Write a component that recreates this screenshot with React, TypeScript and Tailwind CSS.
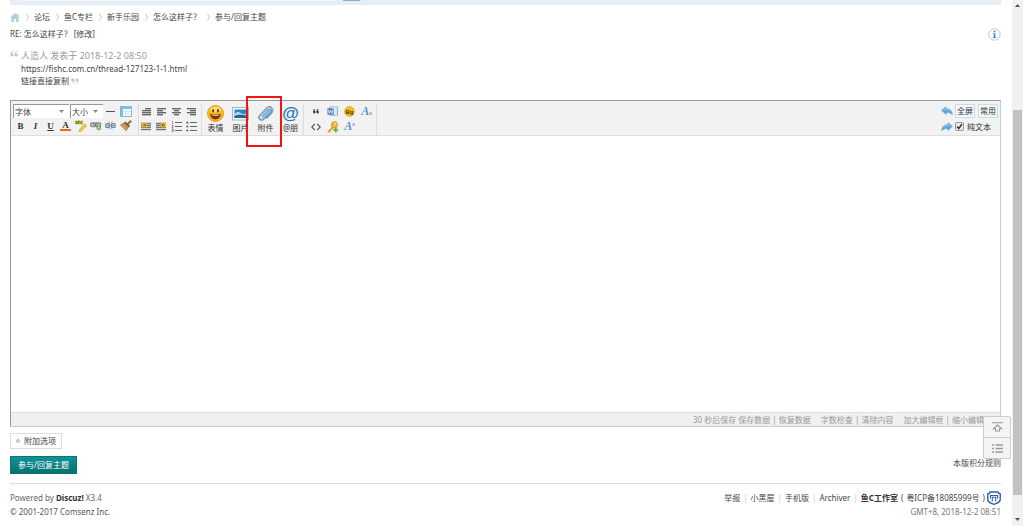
import type { ReactNode } from "react";

function Cell({ label, children }: { label: string; children: ReactNode }) {
  return (
    <button type="button" aria-label={label} className="flex h-[15px] w-[15px] items-center justify-center">
      {children}
    </button>
  );
}

function Lines({ rows }: { rows: number[][] }) {
  return (
    <svg width="11" height="10" viewBox="0 0 11 10">
      {rows.map(([x, w], i) => (
        <rect key={i} x={x} y={1 + i * 2} width={w} height="1.4" fill="#666" />
      ))}
    </svg>
  );
}

function Indent({ x }: { x: number }) {
  return (
    <svg width="11" height="10" viewBox="0 0 11 10">
      <path d="M0 1.500h10M0 3.500h10M0 5.500h10M0 7.600h10" stroke="#777" strokeWidth="1.300" />
      <rect x={x} y=".5" width="5" height="4.800" fill="#f0c020" />
      <path d={x > 3 ? "M6 3h3M7.5 1.8L6 3l1.5 1.2" : "M2 3h3M3.6 1.8L5 3 3.6 4.2"} stroke="#6b4c00" strokeWidth=".8" fill="none" />
    </svg>
  );
}

function BulletList({ numbered }: { numbered?: boolean }) {
  return (
    <svg width="11" height="11" viewBox="0 0 11 11">
      <path d="M4 1.500h7M4 5.500h7M4 9.500h7" stroke="#666" strokeWidth="1" />
      {numbered ? (
        <path d="M1.500.5v2.600M.7 4.400h1.400v1L.8 6.600h1.500M.7 8h1.500v2.400H.7M1 9.200h1.200" stroke="#666" strokeWidth=".7" fill="none" />
      ) : (
        <path d="M.5 .8h1.700v1.600H.5zM.5 4.700h1.700v1.600H.5zM.5 8.700h1.700v1.600H.5z" fill="#444" />
      )}
    </svg>
  );
}

function Picker({ label, width }: { label: string; width: string }) {
  return (
    <span className={"grid h-[14px] items-center border-t border-l border-[#999] bg-white " + width}>
      <select aria-label={label} className="col-start-1 row-start-1 h-[13px] w-full appearance-none bg-transparent pl-px text-[8px] leading-[12px] text-[#444]">
        <option>{label}</option>
      </select>
      <svg className="pointer-events-none col-start-1 row-start-1 mr-[5px] justify-self-end" width="5" height="3" viewBox="0 0 5 3">
        <path d="M0 0h5L2.500 3z" fill="#888" />
      </svg>
    </span>
  );
}

function Big({ label, children, marked }: { label: string; children: ReactNode; marked?: boolean }) {
  return (
    <button type="button" className="relative flex h-[30px] w-[25px] flex-col items-center">
      <span className="flex h-[19px] items-center justify-center">{children}</span>
      <span className="text-[8px] leading-[10px] whitespace-nowrap text-[#333]">{label}</span>
      {marked && <span className="pointer-events-none absolute -top-[8px] -left-[7px] z-10 h-[51px] w-[36px] border-2 border-[#f01414]" />}
    </button>
  );
}

function Divider() {
  return <span className="block h-[31px] border-l border-[#dcdcdc]" />;
}

function Arrow({ flip }: { flip?: boolean }) {
  return (
    <svg width="12" height="10" viewBox="0 0 12 10">
      <g transform={flip ? "matrix(-1 0 0 1 12 0)" : undefined}>
        <path d="M.6 4.200L5 .8v2c3.600-.1 6 1.900 6.300 6C9.800 6.700 8 6.600 5 6.600v2z" fill="#55a9e2" stroke="#3c8cc8" strokeWidth=".5" />
        <path d="M2 4.100L4.600 2.200v1.400c2 0 3.500.4 4.600 1.600" stroke="#a6d8f5" strokeWidth=".7" fill="none" />
      </g>
    </svg>
  );
}

function Crumb({ children }: { children: ReactNode }) {
  return (
    <li className="flex items-center gap-[5px]">
      <svg width="3" height="8" viewBox="0 0 3 8">
        <path d="M.5.5L2.500 4 .5 7.500" stroke="#bbb" fill="none" strokeWidth=".8" />
      </svg>
      <a href="#">{children}</a>
    </li>
  );
}

function Bar() {
  return <span className="mx-[3px] text-[#ccc]">|</span>;
}

function Toolbar() {
  return (
    <div className="flex h-[35px] items-start justify-between border-b border-[#dedede] bg-[#f2f2f2] pt-[3px] pr-[2px] pl-[2px]">
      <div className="flex items-start">
        <div className="w-[125px]">
          <div className="flex h-[14px] items-center">
            <Picker label="字体" width="w-[56px]" />
            <span className="ml-px flex"><Picker label="大小" width="w-[33px]" /></span>
            <Cell label="分隔线">
              <svg width="9" height="3"><path d="M0 1.500h9" stroke="#555" /></svg>
            </Cell>
            <Cell label="表格">
              <svg width="12" height="11" viewBox="0 0 12 11">
                <rect x=".5" y=".5" width="11" height="10" fill="#fff" stroke="#8ab4cd" />
                <path d="M1 1h10v2H1zM1 3h2v7H1z" fill="#6cc3ee" />
                <path d="M3 5.500h8M3 7.800h8M5.500 3v7M8 3v7" stroke="#b9dcef" strokeWidth=".6" />
              </svg>
            </Cell>
          </div>
          <div className="flex font-['Liberation_Serif',serif] text-[9px] leading-[10px] text-[#333]">
            <Cell label="粗体"><b>B</b></Cell>
            <Cell label="斜体"><b><i>I</i></b></Cell>
            <Cell label="下划线"><b className="underline">U</b></Cell>
            <Cell label="文字颜色"><b className="border-b-2 border-[#f26b1d] px-[2px] leading-[8px]">A</b></Cell>
            <Cell label="背景颜色">
              <svg width="12" height="12" viewBox="0 0 12 12">
                <path d="M0 .5h8v4H0z" fill="#dce84c" />
                <text x="0" y="4" fontSize="5" fontFamily="Liberation Sans" fill="#333">abc</text>
                <path d="M4.500 9.500L9.500 4l2 1.700-5 5.300-2.500.5z" fill="#f0d53a" stroke="#a08a20" strokeWidth=".5" />
              </svg>
            </Cell>
            <Cell label="链接">
              <svg width="12" height="11" viewBox="0 0 12 11">
                <g fill="#ccc" stroke="#888" strokeWidth="1.300"><rect x=".7" y="3" width="5" height="3.600" rx="1" /><rect x="5.500" y="3" width="5" height="3.600" rx="1" /></g>
                <path d="M3 4.800h5" stroke="#777" />
                <circle cx="8.800" cy="7.800" r="2.400" fill="#46aa3d" /><path d="M7.400 7.800h2.800M8.800 6.400v2.800" stroke="#fff" strokeWidth=".7" />
              </svg>
            </Cell>
            <Cell label="取消链接">
              <svg width="11" height="11" viewBox="0 0 12 11">
                <g fill="#cdd6de" stroke="#74879a" strokeWidth="1.400"><rect x="1" y="3.500" width="4" height="4" rx="1" /><rect x="7" y="3.500" width="4" height="4" rx="1" /></g>
                <path d="M4 1l1 1.500M8 1L7 2.500M4 10l1-1.500M8 10L7 8.500M3 5.500h2M7 5.500h2" stroke="#55779a" strokeWidth=".8" />
              </svg>
            </Cell>
            <Cell label="清除格式">
              <svg width="12" height="11" viewBox="0 0 12 11">
                <path d="M10.600 0L7 3.300l1.400 1.500L12 1.400z" fill="#a06a38" />
                <path d="M4.500 2.500l4.500 4-2.800 4.200L.4 5z" fill="#c9904e" stroke="#8b5a2a" strokeWidth=".5" />
                <path d="M4.800 2.200l4.600 4.300" stroke="#6d5a4a" strokeWidth="1.800" /><path d="M2.500 5.200l4 4" stroke="#e9c48c" strokeWidth=".7" />
              </svg>
            </Cell>
          </div>
        </div>
        <Divider />
        <div className="grid w-[60px] grid-cols-4">
          <Cell label="自动排版"><Lines rows={[[4, 6], [1, 9], [1, 9], [1, 9]]} /></Cell>
          <Cell label="居左"><Lines rows={[[1, 9], [1, 6], [1, 9], [1, 6]]} /></Cell>
          <Cell label="居中"><Lines rows={[[1, 9], [3, 5], [1, 9], [3, 5]]} /></Cell>
          <Cell label="居右"><Lines rows={[[1, 9], [4, 6], [1, 9], [4, 6]]} /></Cell>
          <Cell label="左浮动"><Indent x={1} /></Cell>
          <Cell label="右浮动"><Indent x={5} /></Cell>
          <Cell label="排序的列表"><BulletList numbered /></Cell>
          <Cell label="未排序列表"><BulletList /></Cell>
        </div>
        <div className="ml-[2px]"><Divider /></div>
        <div className="ml-px flex">
          <Big label="表情">
            <svg width="17" height="17" viewBox="0 0 17 17">
              <circle cx="8.500" cy="8.500" r="8" fill="#f8b922" stroke="#db8c14" strokeWidth=".8" />
              <ellipse cx="8.500" cy="4.500" rx="5.500" ry="3" fill="#ffdf66" />
              <ellipse cx="6.100" cy="5.800" rx="1" ry="1.700" fill="#59340b" /><ellipse cx="10.900" cy="5.800" rx="1" ry="1.700" fill="#59340b" />
              <path d="M3.300 8.800q5.200 1.800 10.400 0c0 3.600-2.300 5.600-5.200 5.600s-5.200-2-5.200-5.600z" fill="#7a3510" />
              <path d="M4.600 9.600q3.900 1 7.800 0l-.3.800q-3.600.8-7.200 0z" fill="#f6d9a0" />
            </svg>
          </Big>
          <Big label="图片">
            <svg width="17" height="14" viewBox="0 0 17 14">
              <rect x=".5" y=".5" width="16" height="12.500" fill="#f6f9fa" stroke="#a4b5be" />
              <rect x="2.500" y="2.500" width="12" height="8.500" fill="#3186c8" />
              <path d="M2.500 7c3-3 5-2 7-.5s3.500.5 5-.5V9h-12z" fill="#a6dcf5" /><path d="M2.500 9c4-2 8-1 12-.6V11h-12z" fill="#236a7c" />
            </svg>
          </Big>
          <Big label="附件" marked>
            <svg width="17" height="17" viewBox="0 0 17 17" fill="none" strokeLinecap="round">
              <path d="M5.500 11.500l6-6.300c1.300-1.400 3 .2 1.800 1.600l-6.800 7c-2.500 2.400-6-.6-3.600-3.300l6.800-7.200c3.200-3.200 7.800.6 4.900 4.300l-4.900 5.300" stroke="#4583b5" strokeWidth="1.700" />
              <path d="M5.500 11.500l6-6.300c1.300-1.400 3 .2 1.800 1.600l-6.800 7c-2.500 2.400-6-.6-3.600-3.300l6.800-7.200c3.200-3.200 7.800.6 4.900 4.300l-4.900 5.300" stroke="#b4d7ef" strokeWidth=".7" />
            </svg>
          </Big>
          <Big label="@朋">
            <span className="font-['Liberation_Sans',sans-serif] text-[17px] leading-[18px] font-bold text-[#2478b8]">@</span>
          </Big>
        </div>
        <Divider />
        <div className="ml-[3px] grid w-[68px] grid-cols-4 justify-items-center">
          <Cell label="引用">
            <svg width="6" height="5" viewBox="0 0 6 5"><path d="M2.400.3C1.700.7 1.400 1.200 1.500 1.900c.7 0 1.100.5 1.100 1.200 0 1.900-2.500 1.900-2.500-.4C.1 1.200.9.200 2.200 0zM5.700.3C5 .7 4.700 1.200 4.800 1.900c.7 0 1.100.5 1.100 1.200 0 1.900-2.500 1.900-2.500-.4C3.400 1.200 4.200.2 5.500 0z" fill="#333" /></svg>
          </Cell>
          <Cell label="Word">
            <svg width="11" height="11" viewBox="0 0 12 11">
              <path d="M3 .5h8.500v9H3z" fill="#fff" stroke="#8aa5cb" /><path d="M8 3h3M8 5h3M8 7h3" stroke="#9bb5da" strokeWidth=".7" />
              <path d="M.5 2h7v7h-7z" fill="#4d7fc5" /><path d="M1.500 3.500l1 4L4 4.200l1.500 3.300 1-4" stroke="#fff" strokeWidth=".8" fill="none" />
            </svg>
          </Cell>
          <Cell label="背景">
            <svg width="11" height="11" viewBox="0 0 11 11">
              <circle cx="5.500" cy="5.500" r="5" fill="#f2bd24" stroke="#e0a81e" strokeWidth=".6" />
              <text x="5.500" y="7.500" textAnchor="middle" fontSize="6" fontWeight="bold" fontFamily="Liberation Sans" fill="#4f390b">Bg</text>
            </svg>
          </Cell>
          <Cell label="下标"><b className="flex items-end font-['Liberation_Serif',serif] text-[12px] leading-[11px] text-[#5a8fd6] italic">A<span className="text-[7px] leading-[7px]">s</span></b></Cell>
          <Cell label="代码">
            <svg width="10" height="8" viewBox="0 0 10 8"><path d="M3.800 1L.8 4l3 3M6.200 1l3 3-3 3" stroke="#555" strokeWidth="1.100" fill="none" /></svg>
          </Cell>
          <Cell label="密码">
            <svg width="12" height="12" viewBox="0 0 12 12">
              <circle cx="7.500" cy="3.800" r="3.200" fill="#f2b73b" stroke="#cb8517" strokeWidth=".6" /><circle cx="8.500" cy="3" r=".8" fill="#fff" />
              <path d="M5.500 5.500L1 10l.5 1.300 1.700-.3.500-1.500 3.300-2.600z" fill="#eba92f" stroke="#cb8517" strokeWidth=".4" />
              <path d="M8.800 6.500v5M6.300 9h5" stroke="#54b82f" strokeWidth="1.700" />
            </svg>
          </Cell>
          <Cell label="上标"><b className="flex items-start font-['Liberation_Serif',serif] text-[12px] leading-[11px] text-[#5a8fd6] italic">A<span className="text-[7px] leading-[7px]">s</span></b></Cell>
        </div>
        <div className="ml-px"><Divider /></div>
      </div>
      <div className="flex flex-col text-[8px] text-[#333]">
        <div className="flex h-[14px] items-center gap-[2px]">
          <button type="button" aria-label="撤销"><Arrow /></button>
          <button type="button" className="h-[14px] w-[20px] border border-[#c9dceb] bg-[#f4f8fb] leading-[12px] whitespace-nowrap">全屏</button>
          <button type="button" className="ml-px h-[14px] w-[20px] border border-[#c9dceb] bg-[#f4f8fb] leading-[12px] whitespace-nowrap">常用</button>
        </div>
        <div className="flex h-[17px] items-center gap-[2px]">
          <button type="button" aria-label="重做"><Arrow flip /></button>
          <label className="flex items-center gap-[3px] leading-[12px]">
            <span className="grid items-center justify-items-center">
              <input type="checkbox" defaultChecked className="peer col-start-1 row-start-1 h-[9px] w-[9px] appearance-none rounded-[2px] border border-[#999] bg-[#eee]" />
              <svg className="pointer-events-none invisible col-start-1 row-start-1 peer-checked:visible" width="7" height="7" viewBox="0 0 7 7"><path d="M1 3.500L2.800 5.500 6 1" stroke="#333" strokeWidth="1.500" fill="none" /></svg>
            </span>
            纯文本
          </label>
        </div>
      </div>
    </div>
  );
}

export default function App() {
  return (
    <div className="flex min-h-screen bg-white font-['Noto_Sans','Noto_Sans_CJK_SC',sans-serif] text-[8px] leading-[12px] text-[#444]">
      <div className="min-w-0 flex-1 pr-[11px] pl-[10px]">
        <div className="flex h-[5px] items-start bg-[#e6edf5] pl-[10px]">
          <span className="h-px w-[316px] bg-[#f4f7f9]" />
          <span className="ml-[7px] h-px w-[17px] bg-[#82b1dc]" />
        </div>
        <nav className="mt-[6px] h-[12px]" aria-label="位置">
          <ol className="flex items-center gap-[6px]">
            <li>
              <a href="#" aria-label="首页">
                <svg width="10" height="9" viewBox="0 0 10 9"><path d="M5 0L0 4.600h1.400V9H4V6h2v3h2.600V4.600H10L8.300 3V.8H7v1z" fill="#b5cde0" /></svg>
              </a>
            </li>
            <Crumb>论坛</Crumb>
            <Crumb>鱼C专栏</Crumb>
            <Crumb>新手乐园</Crumb>
            <Crumb>怎么这样子？</Crumb>
            <Crumb>参与/回复主题</Crumb>
          </ol>
        </nav>
        <div className="mt-[4px] flex h-[14px] items-center justify-between">
          <h1>RE: 怎么这样子？ [<a href="#">修改</a>]</h1>
          <a href="#" aria-label="帮助">
            <svg width="13" height="13" viewBox="0 0 13 13">
              <circle cx="6.500" cy="6.500" r="5.700" fill="#fff" stroke="#b9c3ca" />
              <path d="M5.700 2.800h1.700v1.500H5.700zM5 5.300h2.300v4H8v.8H5v-.8h.8V6.100H5z" fill="#1c91c4" />
            </svg>
          </a>
        </div>
        <blockquote className="mt-[8px] flex items-start gap-[3px] leading-[13px]">
          <svg className="mt-[2px]" width="8" height="6" viewBox="0 0 8 6"><path d="M3.400.4C1.800.8 1.400 1.700 1.600 2.600c1.300-.2 2 .5 2 1.400 0 2-3.200 2-3.200-.6C.4 1.600 1.500.2 3.200 0zM7.600.4c-1.600.4-2 1.300-1.800 2.200 1.300-.2 2 .5 2 1.400 0 2-3.200 2-3.200-.6C4.600 1.600 5.700.2 7.400 0z" fill="#c4c4c4" /></svg>
          <div>
            <p className="text-[9px] text-[#999]">人造人 发表于 2018-12-2 08:50</p>
            <p>https://fishc.com.cn/thread-127123-1-1.html</p>
            <p className="flex items-center gap-[2px] leading-[12px]">
              链接直接复制
              <svg width="8" height="6" viewBox="0 0 8 6"><path transform="rotate(180 4 3)" d="M3.400.4C1.800.8 1.400 1.700 1.600 2.600c1.300-.2 2 .5 2 1.400 0 2-3.200 2-3.200-.6C.4 1.600 1.500.2 3.200 0zM7.600.4c-1.600.4-2 1.300-1.800 2.200 1.300-.2 2 .5 2 1.400 0 2-3.200 2-3.200-.6C4.600 1.600 5.700.2 7.400 0z" fill="#c4c4c4" /></svg>
            </p>
          </div>
        </blockquote>
        <form>
          <div className="mt-[13px] border border-t-[#999] border-r-[#ccc] border-b-[#ccc] border-l-[#999]">
            <Toolbar />
            <textarea aria-label="回复内容" className="block h-[276px] w-full resize-none outline-none" />
            <div className="flex h-[14px] items-center justify-end gap-[10px] border-t border-[#dedede] bg-[#f0f0f0] pr-[8px] text-[#999]">
              <span>30 秒后保存 <a href="#">保存数据</a> | <a href="#">恢复数据</a></span>
              <span><a href="#">字数检查</a> | <a href="#">清除内容</a></span>
              <span><a href="#">加大编辑框</a> | <a href="#">缩小编辑框</a></span>
            </div>
          </div>
          <button type="button" className="mt-[6px] flex h-[16px] items-center gap-[4px] border border-[#ddd] px-[5px]">
            <svg width="4" height="4" viewBox="0 0 4 4"><circle cx="2" cy="2" r="1.400" fill="none" stroke="#aaa" /></svg>
            附加选项
          </button>
          <div className="mt-[7px] flex h-[18px] items-center justify-between">
            <button type="submit" className="h-[18px] border border-[#0b7474] bg-linear-to-b from-[#0e9494] to-[#077070] px-[7px] leading-[16px] text-white">参与/回复主题</button>
            <a href="#" className="mb-[5px]">本版积分规则</a>
          </div>
        </form>
        <footer className="mt-[9px] flex justify-between border-t border-[#ddd] pt-[7px] leading-[14px]">
          <div>
            <p className="text-[#666]">Powered by <a href="#" className="font-bold text-[#333]">Discuz!</a> X3.4</p>
            <p className="text-[#555]">© 2001-2017 <a href="#">Comsenz Inc.</a></p>
          </div>
          <div className="text-right">
            <p className="flex h-[14px] items-center justify-end">
              <a href="#">举报</a><Bar /><a href="#">小黑屋</a><Bar /><a href="#">手机版</a><Bar /><a href="#">Archiver</a><Bar />
              <a href="#" className="mr-[3px] font-bold text-[#333]">鱼C工作室</a>(<a href="#" className="mx-[3px]">粤ICP备18085999号</a>)
              <svg className="ml-[2px]" width="14" height="14" viewBox="0 0 14 14">
                <path d="M3 1h8l.6 1.300 1.600.4v5.800c0 2.500-2 3.200-3.700 3.800L7 13.300l-2.500-1C2.800 11.700.8 11 .8 8.500V2.700l1.600-.4z" fill="#fff" stroke="#2c5faa" strokeWidth="1.400" />
                <path d="M3 4.500h8M3.500 4.500v3M10.500 4.500v3" stroke="#2c5faa" strokeWidth="1.200" fill="none" />
                <path d="M5.300 6v4.500M8.700 6v4.500M5 6.300h4" stroke="#2c5faa" strokeWidth="1.100" />
              </svg>
            </p>
            <p className="text-[#777]">GMT+8, 2018-12-2 08:51</p>
          </div>
        </footer>
      </div>
      <div className="fixed right-[12px] bottom-[67px] z-10 w-[28px] overflow-hidden rounded-[2px] border border-[#ccc] bg-[#f4f4f4]">
        <a href="#" aria-label="返回顶部" className="flex h-[21px] items-center justify-center border-b border-[#ccc]">
          <svg width="11" height="10" viewBox="0 0 11 10"><path d="M0 .8h11M5.500 3L1.500 6.800h2V9h4V6.800h2z" stroke="#999" strokeWidth="1.100" fill="none" /></svg>
        </a>
        <a href="#" aria-label="返回版块" className="flex h-[20px] items-center justify-center">
          <svg width="11" height="9" viewBox="0 0 11 9"><path d="M0 1h2M3.500 1H11M0 4.500h2M3.500 4.500H11M0 8h2M3.500 8H11" stroke="#999" strokeWidth="1.700" /></svg>
        </a>
      </div>
      <div aria-hidden="true" className="flex w-[11px] flex-col items-center bg-[#f1f1f1]">
        <svg className="mt-[4px]" width="5" height="3" viewBox="0 0 5 3"><path d="M0 3h5L2.500 0z" fill="#555" /></svg>
        <div className="flex w-full flex-1 flex-col px-px pt-[103px] pb-[23px]">
          <span className="flex-1 bg-[#c1c1c1]" />
        </div>
        <svg className="mb-[5px]" width="5" height="3" viewBox="0 0 5 3"><path d="M0 0h5L2.500 3z" fill="#555" /></svg>
      </div>
    </div>
  );
}
